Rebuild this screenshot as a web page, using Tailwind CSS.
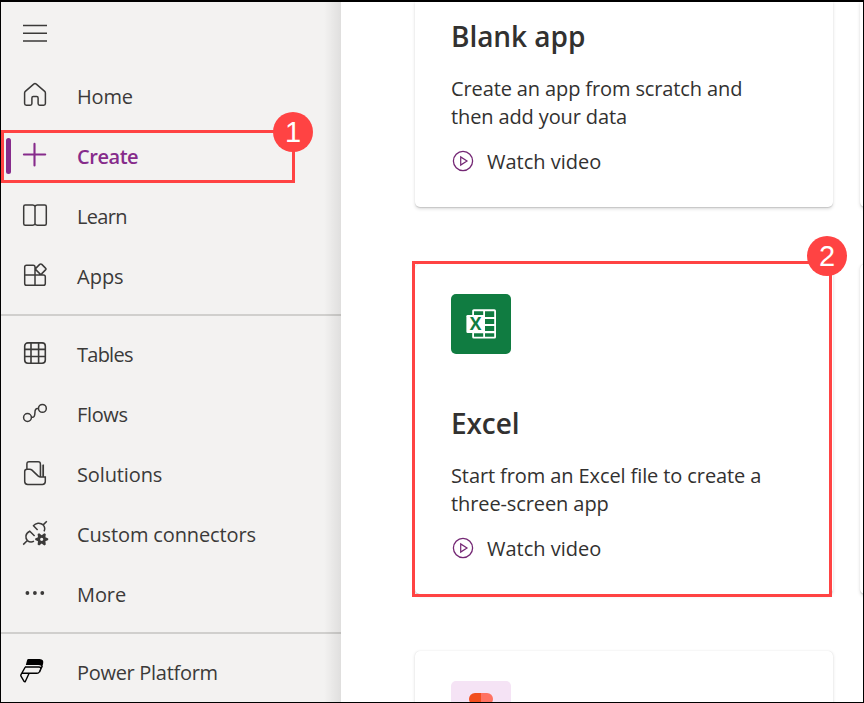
<!DOCTYPE html>
<html lang="en">
<head>
<meta charset="utf-8">
<title>Power Apps</title>
<script src="https://cdn.jsdelivr.net/npm/@tailwindcss/browser@4"></script>
</head>
<body class="font-['Open_Sans','Noto_Sans',sans-serif] text-[#323130]">
<div class="relative flex w-[864px] h-[703px] overflow-hidden border border-t-2 border-black bg-white">

  <nav class="relative w-[340px] shrink-0 bg-[#f3f2f1] text-[20px] leading-7 text-[#3b3a39]">
    <div class="h-16 flex items-center pl-[19px]">
      <svg class="size-[30px]" viewBox="0 0 30 30" fill="none" stroke="#3b3a39" stroke-width="1.4"><path d="M3 6.5H27M3 14.3H27M3 22H27"/></svg>
    </div>
    <a class="h-[60px] flex items-center pl-[19px] gap-[27px]">
      <svg class="size-[30px]" viewBox="0 0 30 30" fill="none" stroke="#3b3a39" stroke-width="1.5"><path d="M13.7 3.1 5.3 10.4Q4.6 11 4.6 12V22.5Q4.6 24.2 6.3 24.2H10.3Q11.9 24.2 11.9 22.6V17Q11.9 15.6 13.3 15.6H16.7Q18.1 15.6 18.1 17V22.6Q18.1 24.2 19.7 24.2H23.7Q25.4 24.2 25.4 22.5V12Q25.4 11 24.7 10.4L16.3 3.1Q15 2 13.7 3.1Z"/></svg>
      <span class="pt-0.5 tracking-[-0.2px]">Home</span>
    </a>
    <a class="relative h-[60px] flex items-center pl-[19px] gap-[27px] font-semibold text-[#862b8b]">
      <span class="absolute left-[5px] top-3 w-[5px] h-9 rounded-full bg-[#862b8b]"></span>
      <svg class="size-[30px]" viewBox="0 0 30 30" fill="none" stroke="#862b8b" stroke-width="2.1" stroke-linecap="round"><path d="M3.9 13.5H25.2M14.5 2.9V24.4"/></svg>
      <span class="pt-0.5 tracking-[-0.45px]">Create</span>
    </a>
    <a class="h-[60px] flex items-center pl-[19px] gap-[27px]">
      <svg class="size-[30px]" viewBox="0 0 30 30" fill="none" stroke="#3b3a39" stroke-width="1.5"><path d="M15 5.6Q14.4 3.9 12.6 3.9H5.2Q3.7 3.9 3.7 5.4V22.7Q3.7 24.2 5.2 24.2H12.6Q14.4 24.2 15 22.8ZM15 5.6Q15.6 3.9 17.4 3.9H24.8Q26.3 3.9 26.3 5.4V22.7Q26.3 24.2 24.8 24.2H17.4Q15.6 24.2 15 22.8"/></svg>
      <span class="pt-0.5 tracking-[-0.65px]">Learn</span>
    </a>
    <a class="h-[60px] flex items-center pl-[19px] gap-[27px]">
      <svg class="size-[30px]" viewBox="0 0 30 30" fill="none" stroke="#3b3a39" stroke-width="1.5"><path d="M15 14H4.7V6Q4.7 4.2 6.5 4.2H13.2Q15 4.2 15 6V24.2M4.7 14V22.4Q4.7 24.2 6.5 24.2H23.5Q25.3 24.2 25.3 22.4V15.8Q25.3 14 23.5 14H15M19.7 3.4 16 7.1Q15.1 8 16 8.9L19.7 12.6Q20.8 13.5 21.8 12.6L25.5 8.9Q26.5 8 25.5 7.1L21.8 3.4Q20.8 2.5 19.7 3.4Z"/></svg>
      <span class="pt-0.5">Apps</span>
    </a>
    <div class="my-2 h-0.5 bg-[#d0cfcd]"></div>
    <a class="h-[60px] flex items-center pl-[19px] gap-[27px]">
      <svg class="size-[30px]" viewBox="0 0 30 30" fill="none" stroke="#3b3a39" stroke-width="1.6"><rect x="4.7" y="3.9" width="20.6" height="20.3" rx="3.2"/><path d="M11 4V24.2M18.6 4V24.2M4.7 10.4H25.3M4.7 17.5H25.3"/></svg>
      <span class="pt-0.5 tracking-[-0.75px]">Tables</span>
    </a>
    <a class="h-[60px] flex items-center pl-[19px] gap-[27px]">
      <svg class="size-[30px]" viewBox="0 0 30 30" fill="none" stroke="#3b3a39" stroke-width="1.5"><circle cx="7.5" cy="18.5" r="3.9"/><circle cx="22.4" cy="9.4" r="3.9"/><path d="M11.4 18.3H12.4C17.2 18.3 12.6 9.6 17.4 9.6H18.5"/></svg>
      <span class="pt-0.5 tracking-[-0.35px]">Flows</span>
    </a>
    <a class="h-[60px] flex items-center pl-[19px] gap-[27px]">
      <svg class="size-[30px]" viewBox="0 0 30 30" fill="none" stroke="#3b3a39" stroke-width="1.5"><path d="M6.9 10.2V4.9Q6.9 2.7 9.1 2.7H18.2Q20.4 2.7 20.4 4.9V17.6M23.3 5.6V17.6M4.7 12.6Q4.7 10.2 7 10.2H9.6Q11 10.2 12 11.1L18 16.9Q19.2 18 20.8 18H25.3V22.6Q25.3 25.5 22.4 25.5H7.7Q4.7 25.5 4.7 22.6Z"/><path d="M22.3 6V17.6" stroke-width="0.6"/></svg>
      <span class="pt-0.5 tracking-[-0.12px]">Solutions</span>
    </a>
    <a class="h-[60px] flex items-center pl-[19px] gap-[27px]">
      <svg class="size-[30px]" viewBox="0 0 30 30" fill="none" stroke="#3b3a39" stroke-width="1.5"><path d="M3.2 25.6 7.1 21.7M26.8 2.3 23.2 5.9M9.3 11.7 14.6 17M9.8 12.2C4.8 14.4 5.3 19.3 7.4 21.6C9.4 23.2 11.8 23.4 14 22.2M13 6.3 17.6 11M13.4 6.7C15.6 4 20 3 23.2 5.9C24.9 7.8 25.2 10 24 12.4"/><path fill="#3b3a39" stroke="none" fill-rule="evenodd" d="M19.1 14.2 21.7 16.2 24.3 14.2 25.8 15.1 25.4 18.2 28.2 19.4V21.1L25.4 22.3 25.8 25.6 24.3 26.5 21.7 24.4 19.1 26.5 17.6 25.6 18 22.3 15.2 21.1V19.4L18 18.2 17.6 15.1ZM21.7 18.7A1.6 1.6 0 1 0 21.7 21.9A1.6 1.6 0 1 0 21.7 18.7Z"/></svg>
      <span class="pt-0.5 tracking-[-0.13px]">Custom connectors</span>
    </a>
    <a class="h-[60px] flex items-center pl-[19px] gap-[27px]">
      <svg class="size-[30px]" viewBox="0 0 30 30" fill="#3b3a39"><circle cx="7.4" cy="14" r="1.9"/><circle cx="14.9" cy="14" r="1.9"/><circle cx="22.3" cy="14" r="1.9"/></svg>
      <span class="pt-0.5 tracking-[-0.1px]">More</span>
    </a>
    <div class="my-2 h-0.5 bg-[#d0cfcd]"></div>
    <a class="h-[60px] flex items-center pl-[19px] gap-[27px]">
      <svg class="size-[30px]" viewBox="0 0 30 30"><path d="M8.4 2H19.6Q24.2 2.3 23.1 6.8L21.9 11.2Q22 7.9 18.2 7.9H5.8L7 3.4Q7.4 2 8.4 2Z"/><path fill="none" stroke="#000" stroke-width="1.4" stroke-linejoin="round" d="M5 10H18.8Q21.4 10 20.6 12.2L19.3 15Q18.6 16.3 17 16.3H2.2M5.3 10 1 17.6Q.6 18.4 1 19.2L4.2 24.6Q4.8 25.2 5.3 24.5L9 16.5M22.2 9 19.6 15"/></svg>
      <span class="pt-0.5 tracking-[-0.3px]">Power Platform</span>
    </a>
    <div class="absolute right-0 inset-y-0 w-[17px] bg-linear-to-r from-black/0 to-black/8"></div>
  </nav>

  <main class="flex gap-[27px] pl-[74px] text-[20px] leading-7">
    <div class="flex flex-col gap-[57px] w-[418px] shrink-0">
      <section class="h-[205px] shrink-0 rounded-b-[5px] bg-white px-9 pt-4 shadow-[0_1.6px_3.6px_rgba(0,0,0,0.14),0_0.3px_0.9px_rgba(0,0,0,0.12)]">
        <h2 class="text-[28px] leading-9 font-semibold tracking-[-0.05px]">Blank app</h2>
        <p class="mt-[21px] tracking-[-0.12px]">Create an app from scratch and<br>then add your data</p>
        <a class="mt-4 flex items-center gap-[13px] pl-px">
          <svg class="mb-0.5 size-[22px]" viewBox="0 0 22 22" fill="none" stroke="#742774" stroke-width="1.3"><circle cx="11" cy="11" r="9.6"/><path d="M8.7 6.9V15.1L15 11Z" stroke-width="1.2"/></svg>
          <span class="pt-px">Watch video</span>
        </a>
      </section>
      <section class="h-[330px] shrink-0 rounded-[5px] bg-white px-9 pt-[30px] shadow-[0_1.6px_3.6px_rgba(0,0,0,0.14),0_0.3px_0.9px_rgba(0,0,0,0.12)]">
        <div class="size-[60px] rounded-[5px] bg-[#107c41]">
          <svg class="size-[60px]" viewBox="0 0 60 60"><rect x="21.2" y="15.2" width="23.8" height="29.4" rx="1.6" fill="#fff"/><path fill="#107c41" d="M23 17.3H32.2V21H23ZM34 17.3H43.2V23H34ZM34 25H43.2V30H34ZM34 32H43.2V37H34ZM23 39.2H32.2V42.7H23ZM34 39.2H43.2V42.7H34Z"/><rect x="15.4" y="21" width="17.8" height="18" rx="1.2" fill="#fff"/><text x="24.6" y="36.1" text-anchor="middle" font-family="Open Sans" font-weight="700" font-size="17.5" fill="#107c41">X</text></svg>
        </div>
        <h2 class="mt-[51px] text-[28px] leading-9 font-semibold tracking-[-0.1px]">Excel</h2>
        <p class="mt-[21px] tracking-[-0.1px]">Start from an Excel file to create a<br>three-screen app</p>
        <a class="mt-4 flex items-center gap-[13px] pl-px">
          <svg class="mb-0.5 size-[22px]" viewBox="0 0 22 22" fill="none" stroke="#742774" stroke-width="1.3"><circle cx="11" cy="11" r="9.6"/><path d="M8.7 6.9V15.1L15 11Z" stroke-width="1.2"/></svg>
          <span class="pt-px">Watch video</span>
        </a>
      </section>
      <section class="h-[330px] shrink-0 rounded-[5px] bg-white px-9 pt-[30px] shadow-[0_1.6px_3.6px_rgba(0,0,0,0.14),0_0.3px_0.9px_rgba(0,0,0,0.12)]">
        <div class="size-[60px] rounded-[5px] bg-[#f5e3f5]">
          <svg class="size-[60px]" viewBox="0 0 60 60"><path fill="#f24e1e" d="M30 12H24a6 6 0 0 0 0 12H30Z"/><path fill="#ff7262" d="M30 12H36a6 6 0 0 1 0 12H30Z"/><path fill="#a259ff" d="M30 24H24a6 6 0 0 0 0 12H30Z"/></svg>
        </div>
      </section>
    </div>
    <div class="flex flex-col gap-[57px] w-[418px] shrink-0">
      <section class="h-[205px] shrink-0 rounded-b-[5px] bg-white shadow-[0_1.6px_3.6px_rgba(0,0,0,0.14),0_0.3px_0.9px_rgba(0,0,0,0.12)]"></section>
      <section class="h-[330px] shrink-0 rounded-[5px] bg-white shadow-[0_1.6px_3.6px_rgba(0,0,0,0.14),0_0.3px_0.9px_rgba(0,0,0,0.12)]"></section>
    </div>
  </main>

  <!-- Step callouts -->
  <div class="absolute left-0 top-[128px] w-[294px] h-[53px] border-3 border-[#ff4343]"></div>
  <div class="absolute left-[272px] top-[110px] size-10 rounded-full bg-[#ff4343] text-white text-[29px] leading-[41px] text-center font-['Liberation_Sans',sans-serif]">1</div>
  <div class="absolute left-[411px] top-[259px] w-[420px] h-[336px] border-3 border-[#ff4343]"></div>
  <div class="absolute left-[806px] top-[234px] size-10 rounded-full bg-[#ff4343] text-white text-[29px] leading-[41px] text-center font-['Liberation_Sans',sans-serif]">2</div>
</div>
</body>
</html>
